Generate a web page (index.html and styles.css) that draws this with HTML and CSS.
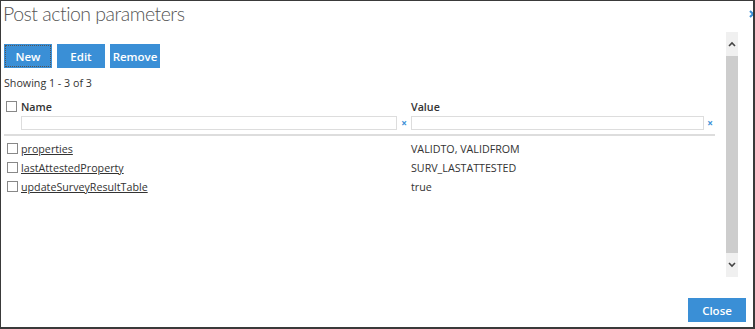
FILE: index.html
```html
<!DOCTYPE html>
<html lang="en">
<head>
    <meta charset="UTF-8">
    <title>Post action parameters</title>
    <link rel="stylesheet" href="styles.css">
</head>
<body>
    <div class="dialog">
        <div class="dialog-head">
            <h1>Post action parameters</h1>
            <svg class="head-close" width="8" height="8" viewBox="0 0 8 8"><path d="M1 1 L7 7 M7 1 L1 7" stroke="#3a8fd6" stroke-width="2"/></svg>
        </div>

        <div class="dialog-main">
            <div class="content">
                <div class="toolbar">
                    <button class="btn focused">New</button>
                    <button class="btn">Edit</button>
                    <button class="btn">Remove</button>
                </div>
                <div class="showing">Showing 1 - 3 of 3</div>

                <div class="grid">
                    <div class="cell head"><span class="box"></span></div>
                    <div class="cell head">Name</div>
                    <div class="cell"></div>
                    <div class="cell head">Value</div>
                    <div class="cell"></div>

                    <div class="cell"></div>
                    <div class="cell filter"><input type="text"></div>
                    <div class="cell clear">&times;</div>
                    <div class="cell filter"><input type="text"></div>
                    <div class="cell clear">&times;</div>
                </div>

                <div class="rule"></div>

                <div class="grid rows">
                    <div class="cell"><span class="box"></span></div>
                    <div class="cell"><a href="#">properties</a></div>
                    <div class="cell"></div>
                    <div class="cell">VALIDTO, VALIDFROM</div>
                    <div class="cell"></div>

                    <div class="cell"><span class="box"></span></div>
                    <div class="cell"><a href="#">lastAttestedProperty</a></div>
                    <div class="cell"></div>
                    <div class="cell">SURV_LASTATTESTED</div>
                    <div class="cell"></div>

                    <div class="cell"><span class="box"></span></div>
                    <div class="cell"><a href="#">updateSurveyResultTable</a></div>
                    <div class="cell"></div>
                    <div class="cell">true</div>
                    <div class="cell"></div>
                </div>
            </div>

            <!-- scrollbar -->
            <div class="scrollbar">
                <div class="arrow">
                    <svg width="8" height="6" viewBox="0 0 8 6"><path d="M1 5 L4 2 L7 5" fill="none" stroke="#444" stroke-width="1.6"/></svg>
                </div>
                <div class="thumb"></div>
                <div class="arrow">
                    <svg width="8" height="6" viewBox="0 0 8 6"><path d="M1 1 L4 4 L7 1" fill="none" stroke="#444" stroke-width="1.6"/></svg>
                </div>
            </div>
        </div>

        <div class="dialog-foot">
            <button class="btn close">Close</button>
        </div>
    </div>
</body>
</html>
```

FILE: styles.css
```css
body {
    margin: 0;
    padding: 0;
    background: #fff;
    font-family: 'Open Sans', sans-serif;
    font-size: 10.7px;
    color: #333;
}

.dialog {
    width: 755px;
    height: 329px;
    box-sizing: border-box;
    border-left: 1px solid #3a3a3a;
    border-top: 1px solid #3a3a3a;
    border-right: 2px solid #3a3a3a;
    border-bottom: 2px solid #3a3a3a;
    display: flex;
    flex-direction: column;
    overflow: hidden;
}

.dialog-head {
    display: flex;
    justify-content: space-between;
    align-items: flex-start;
    height: 30px;
}

.dialog-head h1 {
    margin: 0;
    padding: 1px 0 0 2px;
    font-family: 'Lato', sans-serif;
    font-weight: 300;
    font-size: 19.5px;
    letter-spacing: -0.5px;
    line-height: 24px;
    color: #555;
}

.head-close {
    margin-top: 9px;
    margin-right: -4px;
}

.dialog-main {
    display: flex;
    flex: 1;
}

.content {
    width: 711px;
    padding: 13px 0 0 3px;
}

.toolbar {
    display: flex;
    gap: 5px;
}

.btn {
    background-color: #3a8fd6;
    color: white;
    border: none;
    font-family: 'Open Sans', sans-serif;
    font-weight: 600;
    font-size: 11.5px;
    height: 24px;
    width: 48px;
    padding: 0;
    cursor: pointer;
}

.toolbar .btn:last-child {
    width: 50px;
}

.btn.focused {
    outline: 1px dotted #555;
    outline-offset: -2px;
}

.showing {
    margin-top: 6px;
    line-height: 18px;
}

.grid {
    display: grid;
    grid-template-columns: 17px 376px 14px 293px 12px;
    margin-top: 7px;
}

.cell {
    display: flex;
    align-items: center;
    min-height: 14px;
}

.cell.head {
    font-weight: 600;
    height: 15px;
}

.box {
    display: inline-block;
    width: 9px;
    height: 9px;
    border: 1px solid #888;
    background: #fff;
    margin-left: 2px;
}

.filter {
    margin-top: 2px;
    height: 14px;
}

.filter input {
    width: 100%;
    height: 14px;
    box-sizing: border-box;
    border: 1px solid #ddd;
    padding: 0;
    margin: 0;
}

.clear {
    margin-top: 2px;
    justify-content: center;
    color: #3a8fd6;
    font-size: 10px;
    font-weight: bold;
}

.rule {
    height: 2px;
    background-color: #ddd;
    margin-top: 4px;
    width: 711px;
}

.grid.rows {
    margin-top: 3px;
    grid-auto-rows: 19px;
}

.rows .box {
    margin-left: 3px;
}

.rows a {
    color: #333;
    text-decoration: underline;
}

.scrollbar {
    width: 12px;
    margin-left: 11px;
    margin-top: 1px;
    height: 245px;
    display: flex;
    flex-direction: column;
    background: #f0f0f0;
}

.arrow {
    height: 24px;
    display: flex;
    align-items: center;
    justify-content: center;
}

.thumb {
    flex: 1;
    background-color: #cdcdcd;
}

.dialog-foot {
    display: flex;
    justify-content: flex-end;
    padding: 0 7px 5px 0;
}

.btn.close {
    width: 58px;
}
```
